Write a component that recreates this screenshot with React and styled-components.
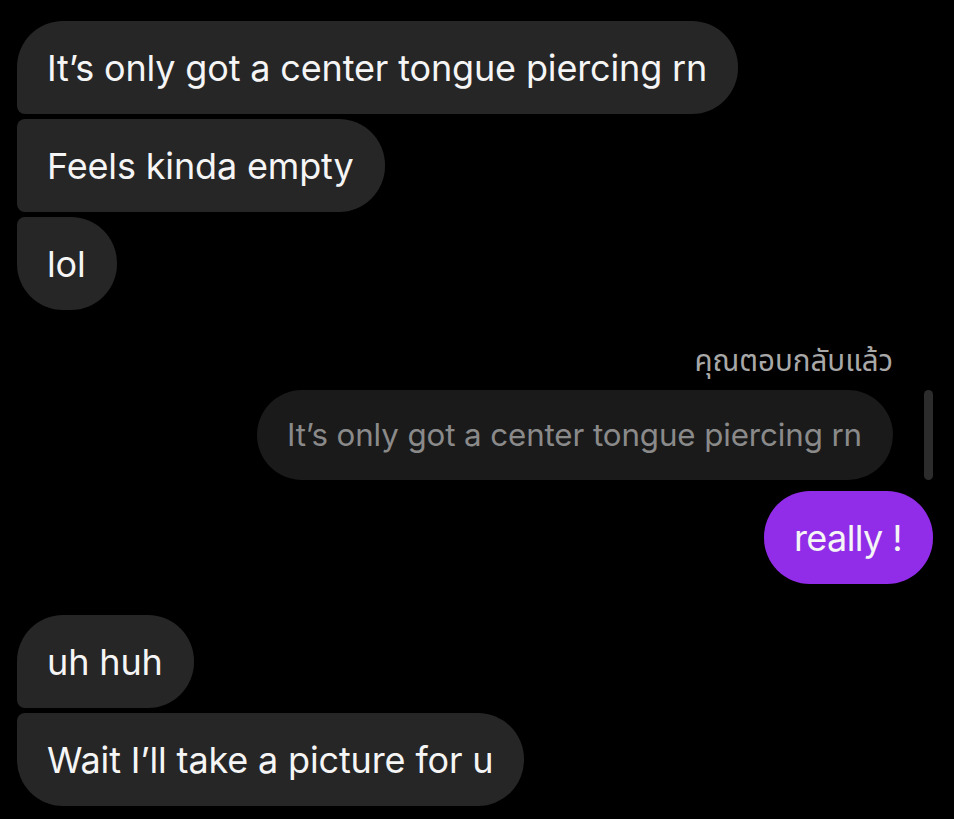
import React from "react";
import styled, { createGlobalStyle } from "styled-components";

const Global = createGlobalStyle`
  html, body { margin: 0; padding: 0; background: #000; }
  body { font-family: Inter, "Noto Sans", sans-serif; }
`;

const Page = styled.div`
  width: 954px;
  height: 819px;
  background: #000;
  box-sizing: border-box;
  padding: 21px 21px 0 17px;
  display: flex;
  flex-direction: column;
  overflow: hidden;
`;

const Group = styled.div`
  display: flex;
  flex-direction: column;
  align-items: ${(p) => (p.$out ? "flex-end" : "flex-start")};
  gap: 5px;
  margin-top: ${(p) => p.$mt || 0}px;
`;

const R = 46;
const r = 8;

const Bubble = styled.div`
  box-sizing: border-box;
  height: 93px;
  display: flex;
  align-items: center;
  padding: 0 31px 0 30px;
  background: ${(p) => (p.$purple ? "#912ce8" : "#262626")};
  color: #f5f5f5;
  font-size: 36px;
  letter-spacing: ${(p) => (p.$purple ? "-0.6px" : "-0.15px")};
  white-space: nowrap;
  border-radius: ${(p) =>
    p.$pos === "first"
      ? `${R}px ${R}px ${R}px ${r}px`
      : p.$pos === "mid"
      ? `${r}px ${R}px ${R}px ${r}px`
      : p.$pos === "last"
      ? `${r}px ${R}px ${R}px ${R}px`
      : `${R}px`};
`;

const Label = styled.div`
  font-family: "Noto Sans Thai", "Noto Sans", sans-serif;
  font-size: 29.5px;
  color: #a8a8a8;
  margin-right: 40px;
  line-height: 36px;
  margin-bottom: 10px;
`;

const ReplyRow = styled.div`
  display: flex;
  align-items: stretch;
  gap: 31px;
`;

const ReplyBubble = styled.div`
  box-sizing: border-box;
  height: 90px;
  display: flex;
  align-items: center;
  padding: 0 31px 0 30px;
  background: #1a1a1a;
  color: #8a8a8a;
  font-size: 31.3px;
  letter-spacing: -0.1px;
  border-radius: 45px;
  white-space: nowrap;
`;

const ReplyBar = styled.div`
  width: 9px;
  border-radius: 5px;
  background: #2c2c2c;
`;

export default function App() {
  return (
    <Page>
      <Global />
      <Group>
        <Bubble $pos="first">It’s only got a center tongue piercing rn</Bubble>
        <Bubble $pos="mid">Feels kinda empty</Bubble>
        <Bubble $pos="last">lol</Bubble>
      </Group>
      <Group $out $mt={34}>
        <Label>คุณตอบกลับแล้ว</Label>
      </Group>
      <Group $out>
        <ReplyRow>
          <ReplyBubble>It’s only got a center tongue piercing rn</ReplyBubble>
          <ReplyBar />
        </ReplyRow>
      </Group>
      <Group $out $mt={11}>
        <Bubble $purple>really !</Bubble>
      </Group>
      <Group $mt={31}>
        <Bubble $pos="first">uh huh</Bubble>
        <Bubble $pos="last">Wait I’ll take a picture for u</Bubble>
      </Group>
    </Page>
  );
}
